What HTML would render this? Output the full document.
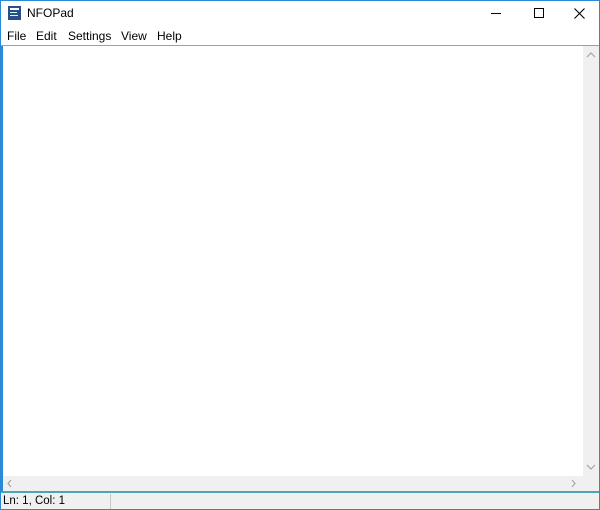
<!DOCTYPE html><html><head><style>
body{margin:0;width:600px;height:510px;overflow:hidden;background:#fff;font-family:"Liberation Sans",sans-serif;font-size:12px;position:relative}
.a{position:absolute}
</style></head><body>
<div class="a" style="left:0;top:0;width:598px;height:508px;border:1px solid #2b8ad8"></div>
<svg class="a" style="left:7px;top:5px" width="16" height="16"><rect x="1" y="1" width="13" height="14" fill="#2a4f8a"/><rect x="3" y="3" width="9" height="2" fill="#fff"/><rect x="3" y="7" width="7" height="1" fill="#cfe"/><rect x="3" y="10" width="8" height="1" fill="#cfe"/></svg>
<div class="a" style="left:27px;top:6px;font-size:12px;color:#000">NFOPad</div>
<div class="a" style="left:491px;top:13px;width:10px;height:1px;background:#000"></div>
<div class="a" style="left:534px;top:8px;width:8px;height:8px;border:1px solid #000"></div>
<svg class="a" style="left:574px;top:8px" width="11" height="11"><path d="M0.5 0.5L10.5 10.5M10.5 0.5L0.5 10.5" stroke="#000" stroke-width="1.1"/></svg>
<div class="a" style="left:7px;top:29px">File</div>
<div class="a" style="left:36px;top:29px">Edit</div>
<div class="a" style="left:68px;top:29px">Settings</div>
<div class="a" style="left:121px;top:29px">View</div>
<div class="a" style="left:157px;top:29px">Help</div>
<div class="a" style="left:1px;top:45px;width:598px;height:1px;background:#a0a0a0"></div>
<div class="a" style="left:1px;top:46px;width:2px;height:446px;background:#2b8ad8"></div>
<div class="a" style="left:583px;top:46px;width:16px;height:430px;background:#f0f0f0"></div>
<svg class="a" style="left:583px;top:50px" width="16" height="10"><path d="M4 7L8 3L12 7" fill="none" stroke="#a6a6a6" stroke-width="1.2"/></svg>
<svg class="a" style="left:583px;top:462px" width="16" height="10"><path d="M4 3L8 7L12 3" fill="none" stroke="#a6a6a6" stroke-width="1.2"/></svg>
<div class="a" style="left:3px;top:476px;width:596px;height:15px;background:#f0f0f0"></div>
<svg class="a" style="left:5px;top:476px" width="10" height="15"><path d="M6 4L3 7.5L6 11" fill="none" stroke="#a6a6a6" stroke-width="1.2"/></svg>
<svg class="a" style="left:569px;top:476px" width="10" height="15"><path d="M3 4L6 7.5L3 11" fill="none" stroke="#a6a6a6" stroke-width="1.2"/></svg>
<div class="a" style="left:1px;top:491px;width:598px;height:2px;background:#4fa3b5"></div>
<div class="a" style="left:1px;top:493px;width:598px;height:16px;background:#f0f0f0"></div>
<div class="a" style="left:110px;top:494px;width:1px;height:15px;background:#c8c8c8"></div>
<div class="a" style="left:3px;top:495px;font-size:11.5px">Ln: 1, Col: 1</div>
</body></html>
